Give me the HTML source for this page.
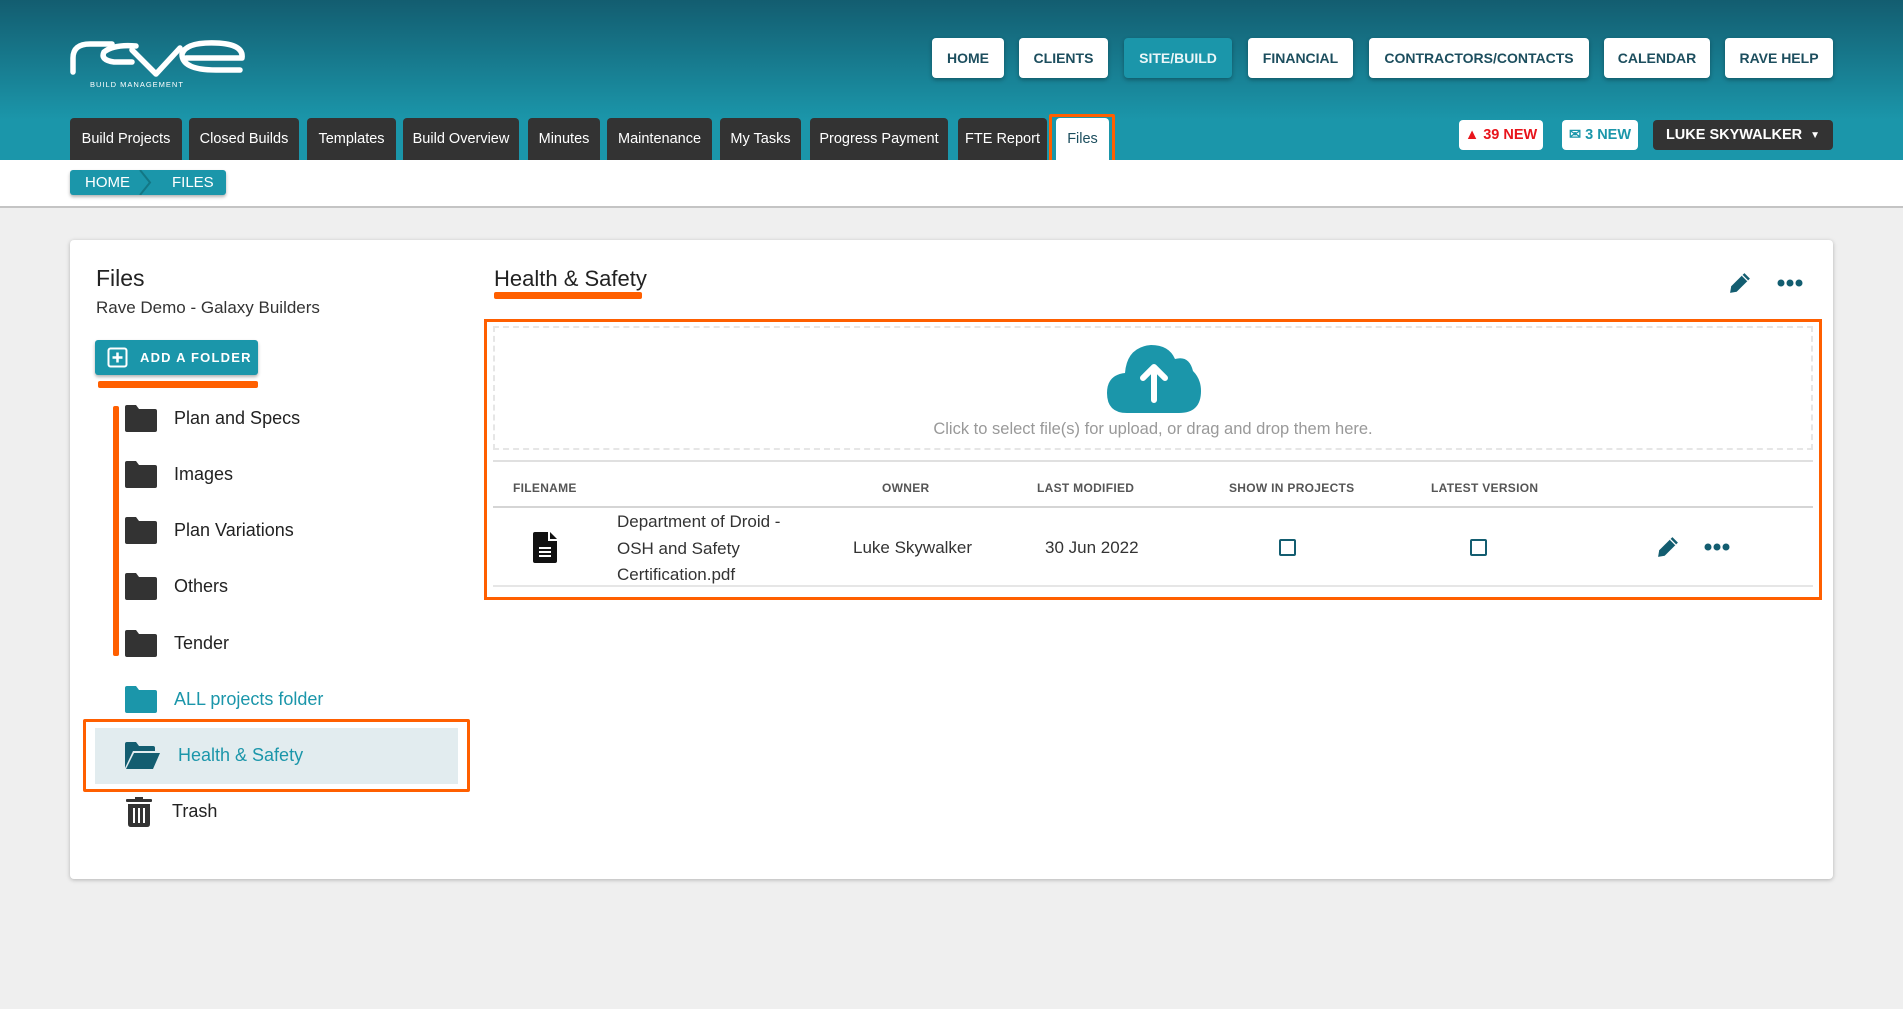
<!DOCTYPE html>
<html><head><meta charset="utf-8">
<style>
*{box-sizing:border-box;margin:0;padding:0}
body{width:1903px;height:1009px;background:#efefef;font-family:"Liberation Sans",Arial,sans-serif;position:relative;overflow:hidden;color:#222}
.a{position:absolute}
#hdr{left:0;top:0;width:1903px;height:160px;background:linear-gradient(#135d70,#1b96aa 75%,#1b96aa)}
.tb{position:absolute;top:38px;height:40px;background:#fff;border-radius:4px;color:#1c4e5e;font-weight:bold;font-size:14px;display:flex;align-items:center;justify-content:center;box-shadow:0 2px 4px rgba(0,0,0,.3)}
.tab{position:absolute;top:118px;height:42px;background:#333;color:#fff;font-size:14.5px;border-radius:4px 4px 0 0;display:flex;align-items:center;justify-content:center}
.bd{position:absolute;top:120px;height:30px;border-radius:4px;font-weight:bold;font-size:14.5px;display:flex;align-items:center;justify-content:center}
.fold{position:absolute;left:125px;width:32px;height:27px}
.ft{position:absolute;left:174px;font-size:18px;color:#222}
.th{position:absolute;top:481px;font-size:12px;font-weight:bold;color:#555;letter-spacing:.3px}
</style></head><body>
<div id="hdr" class="a"></div>
<svg class="a" style="left:68px;top:38px" width="182" height="52" viewBox="0 0 182 52">
<g fill="none" stroke="#fff" stroke-width="5.5" stroke-linecap="round" stroke-linejoin="round">
<path d="M5 34 V20 Q5 6 22 6 H44"/>
<path d="M68 8 Q46 6 36 14 Q32 22 46 24 H64"/>
<path d="M64 12 L88 36 L112 10"/>
<path d="M118 20 H174 Q176 6 148 5 Q118 4 114 16 Q114 32 148 32 H172"/>
</g>
<text x="22" y="49" fill="#fff" font-size="7.5" font-family="Liberation Sans" letter-spacing="1">BUILD MANAGEMENT</text>
</svg>
<div class="tb" style="left:932px;width:72px">HOME</div>
<div class="tb" style="left:1019px;width:89px">CLIENTS</div>
<div class="tb" style="left:1124px;width:108px;background:#1b96aa;color:#eaf6f8">SITE/BUILD</div>
<div class="tb" style="left:1248px;width:105px">FINANCIAL</div>
<div class="tb" style="left:1369px;width:220px">CONTRACTORS/CONTACTS</div>
<div class="tb" style="left:1604px;width:106px">CALENDAR</div>
<div class="tb" style="left:1725px;width:108px">RAVE HELP</div>

<div class="tab" style="left:70px;width:112px">Build Projects</div>
<div class="tab" style="left:189px;width:110px">Closed Builds</div>
<div class="tab" style="left:307px;width:89px">Templates</div>
<div class="tab" style="left:403px;width:116px">Build Overview</div>
<div class="tab" style="left:528px;width:72px">Minutes</div>
<div class="tab" style="left:607px;width:105px">Maintenance</div>
<div class="tab" style="left:720px;width:81px">My Tasks</div>
<div class="tab" style="left:810px;width:138px">Progress Payment</div>
<div class="tab" style="left:958px;width:89px">FTE Report</div>
<div class="tab" style="left:1056px;width:53px;background:#fff;color:#1c4e5e">Files</div>
<div class="a" style="left:1049px;top:114px;width:66px;height:52px;border:3px solid #ff5f00;border-radius:2px"></div>

<div class="bd" style="left:1459px;width:84px;background:#fff;color:#e8141b">&#9650;&nbsp;39 NEW</div>
<div class="bd" style="left:1562px;width:76px;background:#fff;color:#1b96aa">&#9993;&nbsp;3 NEW</div>
<div class="bd" style="left:1653px;width:180px;background:#333;color:#fff">LUKE SKYWALKER&nbsp;&nbsp;<span style="font-size:10px">&#9660;</span></div>

<div class="a" style="left:0;top:160px;width:1903px;height:48px;background:#fff;border-bottom:2px solid #c4c4c4"></div>
<div class="a" style="left:70px;top:170px;width:156px;height:25px;background:#1b96aa;border-radius:3px;box-shadow:0 2px 3px rgba(0,0,0,.3);color:#fff;font-size:15px">
<span class="a" style="left:15px;top:4px">HOME</span>
<svg class="a" style="left:68px;top:0" width="16" height="25"><path d="M2 0 L12 12.5 L2 25" fill="none" stroke="#137785" stroke-width="2"/></svg>
<span class="a" style="left:102px;top:4px">FILES</span></div>

<div class="a" style="left:70px;top:240px;width:1763px;height:639px;background:#fff;border-radius:4px;box-shadow:0 1px 4px rgba(0,0,0,.25)"></div>
<div class="a" style="left:96px;top:265px;font-size:23px;color:#222">Files</div>
<div class="a" style="left:96px;top:298px;font-size:17px;color:#333">Rave Demo - Galaxy Builders</div>
<div class="a" style="left:95px;top:340px;width:163px;height:35px;background:#1b96aa;border-radius:3px;box-shadow:0 2px 3px rgba(0,0,0,.3);color:#fff;font-weight:bold;font-size:13px;letter-spacing:1.2px">
<svg class="a" style="left:12px;top:7px" width="21" height="21"><rect x="1.5" y="1.5" width="18" height="18" rx="2" fill="none" stroke="#fff" stroke-width="2"/><path d="M10.5 5.5v10M5.5 10.5h10" stroke="#fff" stroke-width="2.5"/></svg>
<span class="a" style="left:45px;top:10px">ADD A FOLDER</span></div>
<div class="a" style="left:98px;top:381px;width:160px;height:7px;background:#ff5f00;border-radius:2px"></div>
<div class="a" style="left:113px;top:406px;width:6px;height:250px;background:#ff5f00;border-radius:2px"></div>

<svg width="0" height="0" style="position:absolute"><defs><path id="fd" d="M0 2 Q0 0 2 0 H11 L14 4 H30 Q32 4 32 6 V25 Q32 27 30 27 H2 Q0 27 0 25Z"/></defs></svg>
<svg class="fold" style="top:405px" viewBox="0 0 32 27"><use href="#fd" fill="#333"/></svg><div class="ft" style="top:408px">Plan and Specs</div>
<svg class="fold" style="top:461px" viewBox="0 0 32 27"><use href="#fd" fill="#333"/></svg><div class="ft" style="top:464px">Images</div>
<svg class="fold" style="top:517px" viewBox="0 0 32 27"><use href="#fd" fill="#333"/></svg><div class="ft" style="top:520px">Plan Variations</div>
<svg class="fold" style="top:573px" viewBox="0 0 32 27"><use href="#fd" fill="#333"/></svg><div class="ft" style="top:576px">Others</div>
<svg class="fold" style="top:630px" viewBox="0 0 32 27"><use href="#fd" fill="#333"/></svg><div class="ft" style="top:633px">Tender</div>
<svg class="fold" style="top:686px" viewBox="0 0 32 27"><use href="#fd" fill="#1b96aa"/></svg><div class="ft" style="top:689px;color:#1b96aa">ALL projects folder</div>

<div class="a" style="left:95px;top:728px;width:363px;height:56px;background:#e2ecef"></div>
<div class="a" style="left:83px;top:719px;width:387px;height:73px;border:3px solid #ff5f00;border-radius:2px"></div>
<svg class="a" style="left:125px;top:742px" width="36" height="28" viewBox="0 0 36 28"><path d="M0 2 Q0 0 2 0 H11 L14 4 H28 Q30 4 30 6 V9 H8 L0 26Z" fill="#135d70"/><path d="M9 11 H35 L28 27 H1Z" fill="#135d70"/></svg>
<div class="ft" style="left:178px;top:745px;color:#1b96aa">Health &amp; Safety</div>

<svg class="a" style="left:126px;top:797px" width="26" height="30" viewBox="0 0 26 30"><rect x="0" y="2" width="26" height="3" rx="1" fill="#333"/><rect x="9" y="0" width="8" height="3" fill="#333"/><path d="M2 7 H24 V27 Q24 30 21 30 H5 Q2 30 2 27Z" fill="#333"/><path d="M8 11v15M13 11v15M18 11v15" stroke="#fff" stroke-width="2"/></svg>
<div class="ft" style="left:172px;top:801px">Trash</div>

<div class="a" style="left:494px;top:266px;font-size:22px;color:#222">Health &amp; Safety</div>
<div class="a" style="left:494px;top:292px;width:148px;height:7px;background:#ff5f00;border-radius:2px"></div>
<svg class="a" style="left:1729px;top:272px" width="22" height="22" viewBox="0 0 20 20"><path d="M14 1 L19 6 L7 18 L1 19 L2 13Z" fill="#135d70"/><path d="M12 3 L17 8" stroke="#fff" stroke-width="1.2"/></svg>
<svg class="a" style="left:1777px;top:279px" width="26" height="8"><circle cx="4" cy="4" r="3.5" fill="#135d70"/><circle cx="13" cy="4" r="3.5" fill="#135d70"/><circle cx="22" cy="4" r="3.5" fill="#135d70"/></svg>

<div class="a" style="left:484px;top:319px;width:1338px;height:281px;border:3px solid #ff5f00"></div>
<div class="a" style="left:493px;top:326px;width:1320px;height:124px;border:2px dashed #e6e6e6"></div>
<svg class="a" style="left:1107px;top:345px" width="94" height="68" viewBox="0 0 94 68"><path d="M20 68 Q0 68 0 48 Q0 30 18 28 Q20 2 44 0 Q62 0 68 14 Q82 10 86 26 Q94 34 94 46 Q94 68 72 68Z" fill="#1b96aa"/><path d="M47 55 V22 M36 33 L47 22 L58 33" fill="none" stroke="#fff" stroke-width="6" stroke-linecap="round" stroke-linejoin="round"/></svg>
<div class="a" style="left:493px;top:420px;width:1320px;text-align:center;font-size:16.5px;color:#999">Click to select file(s) for upload, or drag and drop them here.</div>

<div class="a" style="left:493px;top:460px;width:1320px;height:2px;background:#e0e0e0"></div>
<div class="th" style="left:513px">FILENAME</div>
<div class="th" style="left:882px">OWNER</div>
<div class="th" style="left:1037px">LAST MODIFIED</div>
<div class="th" style="left:1229px">SHOW IN PROJECTS</div>
<div class="th" style="left:1431px">LATEST VERSION</div>
<div class="a" style="left:493px;top:506px;width:1320px;height:2px;background:#d5d5d5"></div>
<svg class="a" style="left:533px;top:532px" width="24" height="31" viewBox="0 0 24 31"><path d="M2 0 H15 V9 H24 V29 Q24 31 22 31 H2 Q0 31 0 29 V2 Q0 0 2 0Z" fill="#111"/><path d="M17 0 L24 7 H17Z" fill="#111"/><path d="M6 16h12M6 20h12M6 24h12" stroke="#fff" stroke-width="2"/></svg>
<div class="a" style="left:617px;top:509px;font-size:17px;line-height:26.5px;color:#333">Department of Droid -<br>OSH and Safety<br>Certification.pdf</div>
<div class="a" style="left:853px;top:538px;font-size:17px;color:#333">Luke Skywalker</div>
<div class="a" style="left:1045px;top:538px;font-size:17px;color:#333">30 Jun 2022</div>
<div class="a" style="left:1279px;top:539px;width:17px;height:17px;border:2px solid #135d70;border-radius:2px"></div>
<div class="a" style="left:1470px;top:539px;width:17px;height:17px;border:2px solid #135d70;border-radius:2px"></div>
<svg class="a" style="left:1657px;top:536px" width="22" height="22" viewBox="0 0 20 20"><path d="M14 1 L19 6 L7 18 L1 19 L2 13Z" fill="#135d70"/><path d="M12 3 L17 8" stroke="#fff" stroke-width="1.2"/></svg>
<svg class="a" style="left:1704px;top:543px" width="26" height="8"><circle cx="4" cy="4" r="3.5" fill="#135d70"/><circle cx="13" cy="4" r="3.5" fill="#135d70"/><circle cx="22" cy="4" r="3.5" fill="#135d70"/></svg>
<div class="a" style="left:493px;top:585px;width:1320px;height:2px;background:#e6e6e6"></div>
</body></html>
